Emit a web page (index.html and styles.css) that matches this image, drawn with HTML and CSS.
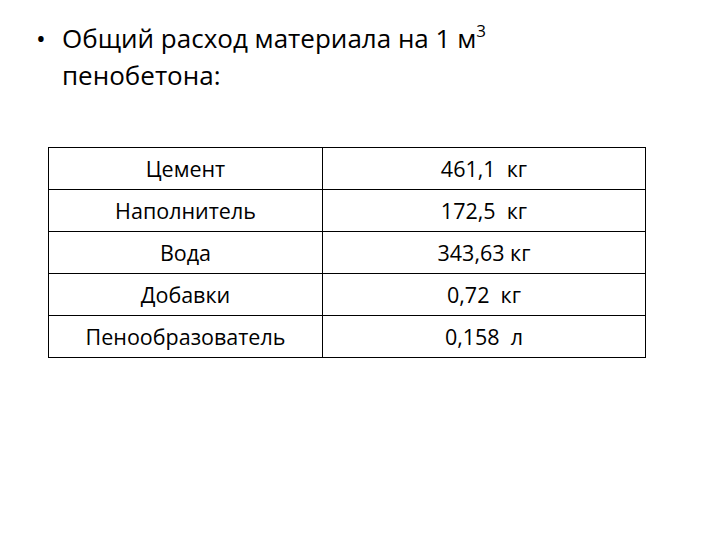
FILE: index.html
```html
<!DOCTYPE html>
<html lang="ru">
<head>
<meta charset="utf-8">
<link rel="stylesheet" href="styles.css">
</head>
<body>
<div class="slide">
  <ul class="points">
    <li class="point"><span class="bullet">•</span><span class="point-text">Общий расход материала на 1 м<sup class="sup">3</sup> пенобетона:</span></li>
  </ul>
  <table class="materials">
    <tr><td class="name">Цемент</td><td class="value">461,1&nbsp; кг</td></tr>
    <tr><td class="name">Наполнитель</td><td class="value">172,5&nbsp; кг</td></tr>
    <tr><td class="name">Вода</td><td class="value">343,63 кг</td></tr>
    <tr><td class="name">Добавки</td><td class="value">0,72&nbsp; кг</td></tr>
    <tr><td class="name">Пенообразователь</td><td class="value">0,158&nbsp; л</td></tr>
  </table>
</div>
</body>
</html>
```
FILE: styles.css
```css
html, body {
  margin: 0;
  padding: 0;
  background: #fff;
}
.slide {
  width: 720px;
  height: 540px;
  overflow: hidden;
  font-family: "Open Sans", "Noto Sans", sans-serif;
  color: #000;
  padding-top: 20px;
  box-sizing: border-box;
}
.points {
  list-style: none;
  margin: 0;
  padding: 0 0 0 36px;
}
.point {
  display: flex;
  font-size: 26px;
  line-height: 37px;
  width: 520px;
}
.bullet {
  width: 26px;
  flex: none;
}
.sup {
  font-size: 17px;
  line-height: 0;
  vertical-align: 11px;
}
.materials {
  margin: 53px 0 0 48px;
  border-collapse: collapse;
  width: 598px;
}
.materials td {
  border: 1px solid #000;
  height: 41px;
  padding: 0;
  text-align: center;
  font-size: 21.5px;
  vertical-align: middle;
}
.materials .name {
  width: 273px;
}
```
